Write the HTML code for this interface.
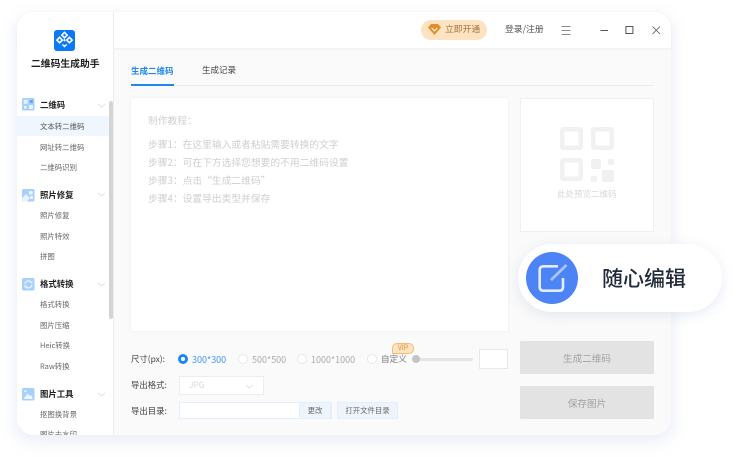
<!DOCTYPE html>
<html lang="zh">
<head>
<meta charset="utf-8">
<title>二维码生成助手</title>
<style>
html,body{margin:0;padding:0;background:#fff;}
body{width:738px;height:457px;overflow:hidden;position:relative;font-family:"Noto Sans CJK SC","Liberation Sans",sans-serif;}
.a{position:absolute;white-space:nowrap;line-height:1;}
svg{position:absolute;overflow:visible;}
.sub{font-size:7.4px;color:#666;left:40px;margin-top:.3px;}
.hd{font-size:8.4px;color:#222;font-weight:700;left:40px;margin-top:.3px;}
.step{font-size:9.75px;color:#cfcfcf;left:148px;margin-top:1px;}
.lab{font-size:8.4px;color:#444;left:131px;}
.btn{position:absolute;left:520px;width:134px;height:33px;background:#e3e3e3;border-radius:1px;color:#a2a2a2;font-size:9.6px;line-height:35px;text-align:center;}
.radio{position:absolute;width:8px;height:8px;border-radius:50%;background:#fff;border:1px solid #e8e8e8;top:354px;}
.opt{font-size:9px;color:#aaa;top:354.7px;}
</style>
</head>
<body>
<div class="a" style="left:17px;top:12px;width:654px;height:423px;border-radius:17px;background:#fafafa;box-shadow:0 5px 14px 3px rgba(215,222,240,.45);"></div>
<div class="a" style="left:17px;top:12px;width:654px;height:36px;border-radius:17px 17px 0 0;background:#fff;box-shadow:0 1px 2px rgba(230,230,235,.6);"></div>
<div class="a" style="left:17px;top:12px;width:96px;height:423px;border-radius:17px 0 0 17px;background:#fff;border-right:1px solid #ececec;overflow:hidden;"></div>

<!-- logo -->
<svg style="left:54px;top:30px" width="21" height="21" viewBox="0 0 21 21">
<rect width="21" height="21" rx="3" fill="#0a79f5"/>
<g fill="none" stroke="#fff" stroke-width="1.6">
<rect x="8.6" y="3.2" width="3.8" height="3.8" transform="rotate(45 10.5 5.1)"/>
<rect x="3.7" y="8.2" width="3.8" height="3.8" transform="rotate(45 5.6 10.1)"/>
<rect x="13.5" y="8.2" width="3.8" height="3.8" transform="rotate(45 15.4 10.1)"/>
</g>
<rect x="9.5" y="9.2" width="2" height="2" fill="#fff" transform="rotate(45 10.5 10.2)"/>
<path d="M7.5 14.5L10.5 17.5L13.5 14.5L12 14.2L10.5 15.2L9 14.2Z" fill="#fff"/>
</svg>
<div class="a" style="left:31px;top:59px;font-size:9.8px;font-weight:700;color:#222;">二维码生成助手</div>

<!-- sidebar -->
<div class="a" style="left:17px;top:116px;width:92px;height:20px;background:#eff6fd;"></div>
<div class="a" style="left:109px;top:101px;width:4px;height:218px;background:#d4d4d4;border-radius:2px;"></div>

<svg style="left:22px;top:98px" width="13" height="13" viewBox="0 0 13 13"><rect width="12.5" height="12.5" rx="1.5" fill="#a9d0fb"/><rect x="1.8" y="1.8" width="4" height="4" fill="#e6f2fe"/><rect x="7.8" y="2" width="3" height="3" fill="#5aa5f5"/><rect x="2" y="8" width="2.5" height="2.5" fill="#e6f2fe"/><rect x="7" y="7" width="4" height="4" fill="#e6f2fe"/></svg>
<div class="a hd" style="top:101px;">二维码</div>
<svg style="left:97px;top:103px" width="9" height="5" viewBox="0 0 9 5"><path d="M1 1L4.5 4L8 1" fill="none" stroke="#d8d8d8" stroke-width=".8"/></svg>
<div class="a sub" style="top:123px;color:#555;">文本转二维码</div>
<div class="a sub" style="top:144px;">网址转二维码</div>
<div class="a sub" style="top:164px;">二维码识别</div>

<svg style="left:22px;top:189px" width="13" height="13" viewBox="0 0 13 13"><rect width="12.5" height="12.5" rx="1.5" fill="#a9d0fb"/><path d="M0 9L4 5L8 9L5 12.5H0Z" fill="#e6f2fe"/><rect x="7" y="2" width="3.6" height="3.6" fill="#e6f2fe"/><rect x="8" y="7" width="3" height="3" fill="#e6f2fe"/></svg>
<div class="a hd" style="top:191px;">照片修复</div>
<svg style="left:97px;top:192px" width="9" height="5" viewBox="0 0 9 5"><path d="M1 1L4.5 4L8 1" fill="none" stroke="#d8d8d8" stroke-width=".8"/></svg>
<div class="a sub" style="top:212px;">照片修复</div>
<div class="a sub" style="top:233px;">照片特效</div>
<div class="a sub" style="top:253px;">拼图</div>

<svg style="left:22px;top:278px" width="13" height="13" viewBox="0 0 13 13"><rect width="12.5" height="12.5" rx="1.5" fill="#a9d0fb"/><path d="M3 6A3.4 3.4 0 0 1 9.3 4.6M9.8 6.8A3.4 3.4 0 0 1 3.5 8.2" fill="none" stroke="#eef6ff" stroke-width="1.2"/><path d="M8.2 5L10.4 5.4L10.4 3Z M4.6 7.8L2.4 7.4L2.4 9.8Z" fill="#eef6ff"/></svg>
<div class="a hd" style="top:280px;">格式转换</div>
<svg style="left:97px;top:282px" width="9" height="5" viewBox="0 0 9 5"><path d="M1 1L4.5 4L8 1" fill="none" stroke="#d8d8d8" stroke-width=".8"/></svg>
<div class="a sub" style="top:301px;">格式转换</div>
<div class="a sub" style="top:322px;">图片压缩</div>
<div class="a sub" style="top:342px;">Heic转换</div>
<div class="a sub" style="top:363px;">Raw转换</div>

<svg style="left:22px;top:388px" width="13" height="13" viewBox="0 0 13 13"><rect width="12.5" height="12.5" rx="1.5" fill="#a9d0fb"/><path d="M1.5 11L5.5 5.5L7.5 8L8.8 6.6L11 11Z" fill="#eef6ff"/><circle cx="3.4" cy="3.2" r="1.1" fill="#eef6ff"/></svg>
<div class="a hd" style="top:390px;">图片工具</div>
<svg style="left:97px;top:392px" width="9" height="5" viewBox="0 0 9 5"><path d="M1 1L4.5 4L8 1" fill="none" stroke="#d8d8d8" stroke-width=".8"/></svg>
<div class="a sub" style="top:411px;">抠图换背景</div>
<div class="a" style="left:18px;top:429px;width:94px;height:6px;overflow:hidden;"><div class="a sub" style="left:22px;top:2px;">图片去水印</div></div>

<!-- header -->
<div class="a" style="left:421px;top:20px;width:66px;height:20px;border-radius:10px;background:#fde3c1;"></div>
<svg style="left:428px;top:24px" width="13" height="11" viewBox="0 0 13 11"><path d="M3 0H10L13 3.5L6.5 11L0 3.5Z" fill="#e08e2e"/><path d="M3.7 4L6.5 6.8L9.3 4" fill="none" stroke="#fde3c1" stroke-width="1.3"/></svg>
<div class="a" style="left:445px;top:25.2px;font-size:8.8px;color:#a4713c;">立即开通</div>
<div class="a" style="left:505px;top:25.2px;font-size:8.8px;color:#555;">登录/注册</div>
<svg style="left:561px;top:26px" width="10" height="9" viewBox="0 0 10 9"><path d="M.5 .5H9.5M.5 4.5H9.5M.5 8.5H9.5" stroke="#666" stroke-width=".8" fill="none"/></svg>
<svg style="left:600px;top:30px" width="9" height="2" viewBox="0 0 9 2"><path d="M.5 .5H8" stroke="#555" stroke-width="1"/></svg>
<svg style="left:625px;top:26px" width="9" height="9" viewBox="0 0 9 9"><rect x=".9" y=".5" width="7" height="7" fill="none" stroke="#555" stroke-width="1"/></svg>
<svg style="left:652px;top:26px" width="9" height="9" viewBox="0 0 9 9"><path d="M.5 .5L8 8M8 .5L.5 8" stroke="#555" stroke-width=".8" fill="none"/></svg>

<!-- tabs -->
<div class="a" style="left:131px;top:67px;font-size:8.5px;font-weight:700;color:#1f86f2;">生成二维码</div>
<div class="a" style="left:202px;top:66px;font-size:8.5px;color:#444;">生成记录</div>
<div class="a" style="left:131px;top:85px;width:523px;height:1px;background:#ececec;"></div>
<div class="a" style="left:131px;top:84px;width:43px;height:2px;background:#1f86f2;"></div>

<!-- text area -->
<div class="a" style="left:131px;top:98px;width:377px;height:233px;background:#fff;box-shadow:0 0 2px rgba(225,225,230,.7);"></div>
<div class="a step" style="top:115px;">制作教程：</div>
<div class="a step" style="top:139px;">步骤1：在这里输入或者粘贴需要转换的文字</div>
<div class="a step" style="top:157px;">步骤2：可在下方选择您想要的不用二维码设置</div>
<div class="a step" style="top:175px;">步骤3：点击“生成二维码”</div>
<div class="a step" style="top:193px;">步骤4：设置导出类型并保存</div>

<!-- preview -->
<div class="a" style="left:520px;top:98px;width:132px;height:132px;background:#fff;border:1px solid #efefef;"></div>
<svg style="left:560px;top:127px" width="54" height="56" viewBox="0 0 54 56">
<g fill="none" stroke="#f1f1f2" stroke-width="4.5"><rect x="2.2" y="2.2" width="18.6" height="18.6" rx="1"/><rect x="33.2" y="2.2" width="18.6" height="18.6" rx="1"/><rect x="2.2" y="33.2" width="18.6" height="18.6" rx="1"/></g>
<g fill="#f1f1f2"><rect x="31" y="32" width="10" height="10" rx="1.5"/><rect x="48" y="32" width="6" height="6" rx="1"/><rect x="31" y="49" width="6" height="6" rx="1"/><rect x="42" y="43" width="12" height="12" rx="1.5"/></g>
</svg>
<div class="a" style="left:557px;top:190px;font-size:8.5px;color:#d8d8d8;">此处预览二维码</div>

<!-- bubble -->
<div class="a" style="left:518px;top:244px;width:204px;height:68px;border-radius:34px;background:#fff;box-shadow:0 3px 12px rgba(200,208,230,.45);"></div>
<div class="a" style="left:526px;top:252px;width:52px;height:52px;border-radius:50%;background:#4c84f6;"></div>
<svg style="left:526px;top:252px" width="52" height="52" viewBox="0 0 52 52">
<path d="M32 14.3H17.5Q13.7 14.3 13.7 18V35Q13.7 38.7 17.5 38.7H33.5Q37 38.7 37 35V26" fill="none" stroke="#e4ecff" stroke-width="2.6"/>
<path d="M25 28L40.5 13" stroke="#a9c3fb" stroke-width="2.8"/>
</svg>
<div class="a" style="left:602px;top:267.5px;font-size:21px;font-weight:500;color:#222b3a;">随心编辑</div>

<!-- controls -->
<div class="a lab" style="top:355px;">尺寸(px):</div>
<div class="a" style="left:178px;top:354px;width:4px;height:4px;border-radius:50%;background:#fff;border:3px solid #1f86f2;"></div>
<div class="a opt" style="left:192px;color:#3d96f3;">300*300</div>
<div class="radio" style="left:238px;"></div>
<div class="a opt" style="left:252px;">500*500</div>
<div class="radio" style="left:297px;"></div>
<div class="a opt" style="left:311px;">1000*1000</div>
<div class="radio" style="left:367px;"></div>
<div class="a opt" style="left:381px;color:#777;font-size:8.6px;">自定义</div>
<div class="a" style="left:392px;top:343px;width:20px;height:9px;border-radius:5px 5px 5px 1px;background:#fde3c1;border:.5px solid #f3bd78;color:#dd8e32;font-size:7px;line-height:9px;text-align:center;">VIP</div>
<div class="a" style="left:414px;top:358px;width:59px;height:3px;background:#e4e4e4;border-radius:2px;"></div>
<div class="a" style="left:412px;top:355px;width:8px;height:8px;border-radius:50%;background:#c4c4c4;"></div>
<div class="a" style="left:479px;top:349px;width:27px;height:18px;background:#fff;border:1px solid #e8e8e8;"></div>

<div class="a lab" style="top:381px;">导出格式:</div>
<div class="a" style="left:179px;top:376px;width:83px;height:17px;background:#fff;border:1px solid #ededed;"></div>
<div class="a" style="left:189px;top:380.5px;font-size:8.4px;color:#d8d8d8;">JPG</div>
<svg style="left:245px;top:384px" width="9" height="5" viewBox="0 0 9 5"><path d="M1 1L4.5 4L8 1" fill="none" stroke="#d8d8d8" stroke-width=".8"/></svg>

<div class="a lab" style="top:406.5px;">导出目录:</div>
<div class="a" style="left:179px;top:402px;width:151px;height:15px;background:#fff;border:1px solid #e3effc;"></div>
<div class="a" style="left:299px;top:402px;width:32px;height:17px;background:#eef4fb;border:1px solid #e3effc;box-sizing:border-box;text-align:center;font-size:7.4px;line-height:15px;color:#666;">更改</div>
<div class="a" style="left:337px;top:402px;width:61px;height:17px;background:#eef4fb;border:1px solid #e3effc;box-sizing:border-box;text-align:center;font-size:7.4px;line-height:15px;color:#666;">打开文件目录</div>

<div class="btn" style="top:341px;">生成二维码</div>
<div class="btn" style="top:386px;">保存图片</div>
</body>
</html>
